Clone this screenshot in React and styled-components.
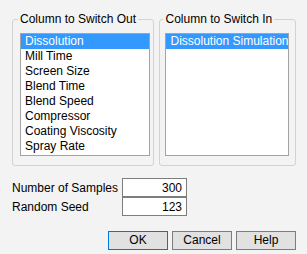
import React from "react";
import styled, { createGlobalStyle } from "styled-components";

const GlobalStyle = createGlobalStyle`
  html, body {
    margin: 0;
    background: #f3f3f3;
  }
  body {
    font-family: "Liberation Sans", Arial, sans-serif;
    font-size: 12px;
    color: #000;
  }
`;

const Dialog = styled.div`
  width: 307px;
  height: 254px;
  box-sizing: border-box;
  padding: 12px 11px 0 12px;
  display: flex;
  flex-direction: column;
`;

const GroupRow = styled.div`
  display: flex;
  gap: 5px;
`;

const Group = styled.fieldset`
  margin: 0;
  min-inline-size: 0;
  width: ${(p) => p.$width}px;
  box-sizing: border-box;
  padding: 6px ${(p) => p.$padR}px 9px ${(p) => p.$padL}px;
  border: 1px solid #d2d2d2;
  border-radius: 3px;
`;

const Legend = styled.legend`
  margin-left: -2px;
  padding: 0 2px;
  line-height: 15px;
  white-space: nowrap;
`;

const ListBox = styled.div`
  width: ${(p) => p.$width}px;
  height: 123px;
  box-sizing: border-box;
  border: 1px solid #a3a3a3;
  background: #fff;
  overflow: hidden;
`;

const ListItem = styled.div`
  height: 15px;
  line-height: 15px;
  padding-left: 4px;
  white-space: nowrap;
  overflow: hidden;
  background: ${(p) => (p.$selected ? "#3399ff" : "transparent")};
  color: ${(p) => (p.$selected ? "#fff" : "#000")};
`;

const FieldGrid = styled.div`
  margin-top: 12px;
  display: grid;
  grid-template-columns: 110px 65px;
  grid-auto-rows: 19px;
`;

const FieldLabel = styled.label`
  display: flex;
  align-items: center;
  white-space: nowrap;
`;

const NumberInput = styled.input`
  width: 100%;
  height: 19px;
  box-sizing: border-box;
  margin: 0;
  padding: 0 4px;
  border: 1px solid #7d7d7d;
  background: #fff;
  font: inherit;
  color: #000;
  text-align: right;
  outline: none;
`;

const ButtonRow = styled.div`
  margin-top: 15px;
  display: flex;
  justify-content: flex-end;
  gap: 4px;
`;

const Button = styled.button`
  width: 60px;
  height: 19px;
  box-sizing: border-box;
  margin: 0;
  padding: 0;
  border: 1px solid ${(p) => (p.$default ? "#0078d7" : "#7d7d7d")};
  background: #e1e1e1;
  font: inherit;
  color: #000;
  line-height: 17px;
`;

const switchOut = [
  "Dissolution",
  "Mill Time",
  "Screen Size",
  "Blend Time",
  "Blend Speed",
  "Compressor",
  "Coating Viscosity",
  "Spray Rate",
];

const switchIn = ["Dissolution Simulation"];

const fields = [
  { label: "Number of Samples", value: "300" },
  { label: "Random Seed", value: "123" },
];

export default function App() {
  return (
    <>
      <GlobalStyle />
      <Dialog>
        <GroupRow>
          <Group $width={143} $padL={7} $padR={4}>
            <Legend>Column to Switch Out</Legend>
            <ListBox $width={130}>
              {switchOut.map((name, i) => (
                <ListItem key={name} $selected={i === 0}>
                  {name}
                </ListItem>
              ))}
            </ListBox>
          </Group>
          <Group $width={137} $padL={5} $padR={6}>
            <Legend>Column to Switch In</Legend>
            <ListBox $width={124}>
              {switchIn.map((name, i) => (
                <ListItem key={name} $selected={i === 0}>
                  {name}
                </ListItem>
              ))}
            </ListBox>
          </Group>
        </GroupRow>
        <FieldGrid>
          {fields.map((f) => (
            <React.Fragment key={f.label}>
              <FieldLabel>{f.label}</FieldLabel>
              <NumberInput defaultValue={f.value} />
            </React.Fragment>
          ))}
        </FieldGrid>
        <ButtonRow>
          <Button $default>OK</Button>
          <Button>Cancel</Button>
          <Button>Help</Button>
        </ButtonRow>
      </Dialog>
    </>
  );
}
